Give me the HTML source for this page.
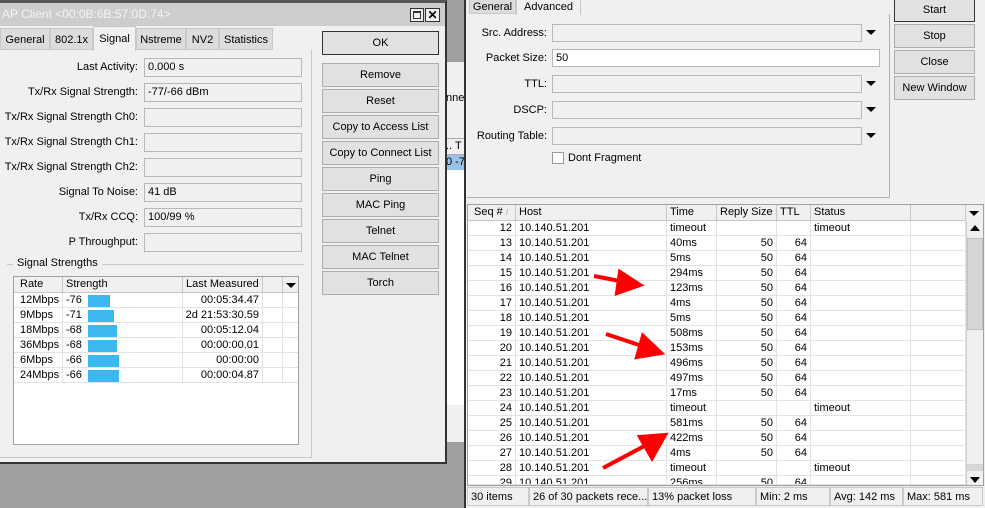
<!DOCTYPE html>
<html><head><style>
*{box-sizing:border-box;margin:0;padding:0;white-space:nowrap}
html,body{width:985px;height:508px;overflow:hidden}
body{position:relative;background:#a0a0a0;font-family:"Liberation Sans",sans-serif;font-size:11px;color:#000}
.a{position:absolute}
.btn{position:absolute;background:#e1e1e1;border:1px solid #adadad;text-align:center;line-height:22px;height:24px}
.lbl{position:absolute;text-align:right;width:138px;left:0}
.inp{position:absolute;left:144px;width:158px;height:19px;background:#f0f0f0;border:1px solid #b8b8b8;padding-left:3px;line-height:17px}
.tab{position:absolute;background:#dcdcdc;border:1px solid #c8c8c8;height:22px;line-height:22px;text-align:center}
.row{position:absolute;height:15px;line-height:15px;border-bottom:1px solid #e3e3e3}
.c{position:absolute;top:0;height:15px;border-right:1px solid #e3e3e3;overflow:hidden}
.r{text-align:right;padding-right:3px}
.l{padding-left:3px}
.bar{position:absolute;top:2px;height:12px;background:#3cb7ef}
.sb{position:absolute;top:0;height:19px;line-height:19px;border:1px solid #c8c8c8;padding-left:3px;background:#f0f0f0;overflow:hidden}
</style></head><body>
<div class="a" style="left:446px;top:62px;width:19px;height:24px;background:#f0f0f0"></div>
<div class="a" style="left:446px;top:86px;width:19px;height:356px;background:#f0f0f0"></div>
<div class="a" style="left:446px;top:92px;width:19px;overflow:hidden">nne</div>
<div class="a" style="left:446px;top:138px;width:19px;height:17px;background:#f0f0f0;border-top:1px solid #aaa;border-bottom:1px solid #aaa;line-height:15px;overflow:hidden">.. T</div>
<div class="a" style="left:446px;top:155px;width:19px;height:15px;background:#99c2e8;line-height:15px;overflow:hidden">0 -7</div>
<div class="a" style="left:446px;top:170px;width:19px;height:235px;background:#fff"></div>
<div class="a" style="left:0;top:0;width:447px;height:464px;background:#f0f0f0;border-right:2px solid #333;border-bottom:2px solid #333;border-top:3px solid #555"></div>
<div class="a" style="left:0;top:3px;width:445px;height:23px;background:#cdcdcd;color:#f4f4f4;line-height:23px;padding-left:2px;font-size:12px">AP Client &lt;00:0B:6B:57:0D:74&gt;</div>
<div class="a" style="left:410px;top:8px;width:14px;height:14px;border:1px solid #333;background:#eee"><div style="margin:2px;width:8px;height:8px;border:1px solid #333;border-top-width:2px"></div></div>
<div class="a" style="left:425px;top:8px;width:15px;height:14px;border:1px solid #333;background:#eee;font-weight:bold;font-size:12px;line-height:12px;text-align:center">✕</div>
<div class="tab" style="left:0;top:28px;width:50px">General</div>
<div class="tab" style="left:50px;top:28px;width:43px">802.1x</div>
<div class="a" style="left:93px;top:26px;width:43px;height:25px;background:#f0f0f0;border:1px solid #c8c8c8;border-bottom:none;text-align:center;line-height:24px">Signal</div>
<div class="tab" style="left:136px;top:28px;width:50px">Nstreme</div>
<div class="tab" style="left:186px;top:28px;width:33px">NV2</div>
<div class="tab" style="left:219px;top:28px;width:54px">Statistics</div>
<div class="a" style="left:0;top:50px;width:312px;height:408px;border-right:1px solid #c8c8c8;border-bottom:1px solid #c8c8c8"></div>
<div class="lbl" style="top:61px">Last Activity:</div><div class="inp" style="top:58px">0.000 s</div>
<div class="lbl" style="top:86px">Tx/Rx Signal Strength:</div><div class="inp" style="top:83px">-77/-66 dBm</div>
<div class="lbl" style="top:111px">Tx/Rx Signal Strength Ch0:</div><div class="inp" style="top:108px"></div>
<div class="lbl" style="top:136px">Tx/Rx Signal Strength Ch1:</div><div class="inp" style="top:133px"></div>
<div class="lbl" style="top:161px">Tx/Rx Signal Strength Ch2:</div><div class="inp" style="top:158px"></div>
<div class="lbl" style="top:186px">Signal To Noise:</div><div class="inp" style="top:183px">41 dB</div>
<div class="lbl" style="top:211px">Tx/Rx CCQ:</div><div class="inp" style="top:208px">100/99 %</div>
<div class="lbl" style="top:236px">P Throughput:</div><div class="inp" style="top:233px"></div>
<div class="a" style="left:7px;top:264px;width:297px;border-top:1px solid #c8c8c8"></div>
<div class="a" style="left:13px;top:257px;background:#f0f0f0;padding:0 4px">Signal Strengths</div>
<div class="a" style="left:13px;top:276px;width:286px;height:169px;background:#fff;border:1px solid #a0a0a0"></div>
<div class="row" style="left:14px;top:277px;width:284px;height:16px;background:#f0f0f0;border-bottom:1px solid #c8c8c8">
<div class="c l" style="left:3px;width:46px;height:16px;border-color:#c8c8c8">Rate</div>
<div class="c l" style="left:49px;width:120px;height:16px;border-color:#c8c8c8">Strength</div>
<div class="c l" style="left:169px;width:80px;height:16px;border-color:#c8c8c8">Last Measured</div>
<div class="c" style="left:249px;width:20px;height:16px;border-color:#c8c8c8"></div>
<div class="a" style="left:272px;top:6px;border-left:5px solid transparent;border-right:5px solid transparent;border-top:5px solid #000"></div>
</div>
<div id="ss"></div>
<div class="btn" style="left:322px;top:31px;width:117px;border:1px solid #333">OK</div>
<div class="btn" style="left:322px;top:63px;width:117px">Remove</div>
<div class="btn" style="left:322px;top:89px;width:117px">Reset</div>
<div class="btn" style="left:322px;top:115px;width:117px">Copy to Access List</div>
<div class="btn" style="left:322px;top:141px;width:117px">Copy to Connect List</div>
<div class="btn" style="left:322px;top:167px;width:117px">Ping</div>
<div class="btn" style="left:322px;top:193px;width:117px">MAC Ping</div>
<div class="btn" style="left:322px;top:219px;width:117px">Telnet</div>
<div class="btn" style="left:322px;top:245px;width:117px">MAC Telnet</div>
<div class="btn" style="left:322px;top:271px;width:117px">Torch</div>
<div class="a" style="left:464px;top:0;width:521px;height:508px;background:#f0f0f0;border-left:2px solid #333"></div>
<div class="tab" style="left:469px;top:-8px;width:47px;height:22px;line-height:28px">General</div>
<div class="a" style="left:516px;top:-4px;width:65px;height:19px;background:#f0f0f0;border:1px solid #c8c8c8;border-bottom:none;line-height:20px;text-align:center">Advanced</div>
<div class="a" style="left:467px;top:14px;width:423px;height:184px;border-right:1px solid #b0b0b0;border-bottom:1px solid #b0b0b0"></div>
<div class="a" style="left:465px;top:27px;width:82px;text-align:right">Src. Address:</div>
<div class="a" style="left:552px;top:24px;width:310px;height:18px;border:1px solid #b8b8b8"></div>
<div class="a" style="left:465px;top:52px;width:82px;text-align:right">Packet Size:</div>
<div class="a" style="left:552px;top:49px;width:328px;height:18px;border:1px solid #b8b8b8;background:#fff;padding-left:3px;line-height:16px">50</div>
<div class="a" style="left:465px;top:78px;width:82px;text-align:right">TTL:</div>
<div class="a" style="left:552px;top:75px;width:310px;height:18px;border:1px solid #b8b8b8"></div>
<div class="a" style="left:465px;top:104px;width:82px;text-align:right">DSCP:</div>
<div class="a" style="left:552px;top:101px;width:310px;height:18px;border:1px solid #b8b8b8"></div>
<div class="a" style="left:465px;top:130px;width:82px;text-align:right">Routing Table:</div>
<div class="a" style="left:552px;top:127px;width:310px;height:18px;border:1px solid #b8b8b8"></div>
<div class="a" style="left:866px;top:30px;border-left:5px solid transparent;border-right:5px solid transparent;border-top:5px solid #000"></div>
<div class="a" style="left:866px;top:81px;border-left:5px solid transparent;border-right:5px solid transparent;border-top:5px solid #000"></div>
<div class="a" style="left:866px;top:107px;border-left:5px solid transparent;border-right:5px solid transparent;border-top:5px solid #000"></div>
<div class="a" style="left:866px;top:133px;border-left:5px solid transparent;border-right:5px solid transparent;border-top:5px solid #000"></div>
<div class="a" style="left:552px;top:152px;width:12px;height:12px;border:1px solid #999;background:#fff"></div>
<div class="a" style="left:568px;top:152px">Dont Fragment</div>
<div class="btn" style="left:894px;top:-2px;width:81px;border:1px solid #333">Start</div>
<div class="btn" style="left:894px;top:24px;width:81px">Stop</div>
<div class="btn" style="left:894px;top:50px;width:81px">Close</div>
<div class="btn" style="left:894px;top:76px;width:81px">New Window</div>
<div class="a" style="left:467px;top:204px;width:517px;height:282px;background:#fff;border:1px solid #a0a0a0"></div>
<div class="row" style="left:468px;top:205px;width:498px;height:16px;background:#f0f0f0;border-bottom:1px solid #c8c8c8">
<div class="c l" style="left:3px;width:45px;height:16px;border-color:#c8c8c8">Seq # <span style="color:#aaa;font-size:9px">/</span></div>
<div class="c l" style="left:48px;width:151px;height:16px;border-color:#c8c8c8">Host</div>
<div class="c l" style="left:199px;width:50px;height:16px;border-color:#c8c8c8">Time</div>
<div class="c l" style="left:249px;width:60px;height:16px;border-color:#c8c8c8">Reply Size</div>
<div class="c l" style="left:309px;width:34px;height:16px;border-color:#c8c8c8">TTL</div>
<div class="c l" style="left:343px;width:100px;height:16px;border-color:#c8c8c8">Status</div>
<div class="c" style="left:443px;width:55px;height:16px;border-color:#c8c8c8"></div>
</div>
<div class="a" style="left:966px;top:205px;width:17px;height:16px;background:#f0f0f0"><div class="a" style="left:3px;top:6px;border-left:5px solid transparent;border-right:5px solid transparent;border-top:5px solid #000"></div></div>
<div class="a" style="left:966px;top:221px;width:17px;height:264px;background:#f0f0f0;border-left:1px solid #ccc"></div>
<div class="a" style="left:967px;top:238px;width:16px;height:92px;background:#d6d6d6;border:1px solid #c0c0c0"></div>
<div class="a" style="left:967px;top:464px;width:16px;height:7px;background:#d6d6d6"></div>
<div class="a" style="left:970px;top:225px;border-left:5px solid transparent;border-right:5px solid transparent;border-bottom:6px solid #000"></div>
<div class="a" style="left:970px;top:477px;border-left:5px solid transparent;border-right:5px solid transparent;border-top:6px solid #000"></div>
<div id="pt"></div>
<div class="a" style="left:466px;top:486px;width:519px;height:22px;background:#f0f0f0"></div>
<div class="sb" style="left:467px;top:487px;width:62px">30 items</div>
<div class="sb" style="left:529px;top:487px;width:119px">26 of 30 packets rece...</div>
<div class="sb" style="left:648px;top:487px;width:108px">13% packet loss</div>
<div class="sb" style="left:756px;top:487px;width:74px">Min: 2 ms</div>
<div class="sb" style="left:830px;top:487px;width:73px">Avg: 142 ms</div>
<div class="sb" style="left:903px;top:487px;width:80px">Max: 581 ms</div>
<svg class="a" style="left:0;top:0" width="985" height="508">
<g stroke="#f00" stroke-width="4" fill="#f00">
<line x1="594" y1="276" x2="625" y2="282"/><polygon points="640,285 620,272 617,293"/>
<line x1="606" y1="334" x2="645" y2="347"/><polygon points="661,353 643,336 637,357"/>
<line x1="603" y1="468" x2="650" y2="443"/><polygon points="665,435 640,437 652,458"/>
</g></svg>
<script>
var s=[["12Mbps","-76",22,"00:05:34.47"],["9Mbps","-71",26,"2d 21:53:30.59"],["18Mbps","-68",29,"00:05:12.04"],["36Mbps","-68",29,"00:00:00.01"],["6Mbps","-66",31,"00:00:00"],["24Mbps","-66",31,"00:00:04.87"]];
var h="";s.forEach(function(r,i){h+='<div class="row" style="left:14px;top:'+(293+i*15)+'px;width:284px"><div class="c l" style="left:3px;width:46px">'+r[0]+'</div><div class="c l" style="left:49px;width:120px">'+r[1]+'<div class="bar" style="left:25px;width:'+r[2]+'px"></div></div><div class="c r" style="left:169px;width:80px">'+r[3]+'</div><div class="c" style="left:249px;width:20px"></div></div>';});
document.getElementById("ss").innerHTML=h;
var t=["timeout","40ms","5ms","294ms","123ms","4ms","5ms","508ms","153ms","496ms","497ms","17ms","timeout","581ms","422ms","4ms","timeout","256ms"];
h="";t.forEach(function(v,i){var to=v=="timeout";var y=221+i*15;var hh=Math.min(15,485-y);h+='<div class="row" style="left:468px;top:'+y+'px;width:498px;height:'+hh+'px;overflow:hidden"><div class="c r" style="left:3px;width:45px">'+(12+i)+'</div><div class="c l" style="left:48px;width:151px">10.140.51.201</div><div class="c l" style="left:199px;width:50px">'+v+'</div><div class="c r" style="left:249px;width:60px">'+(to?"":"50")+'</div><div class="c r" style="left:309px;width:34px">'+(to?"":"64")+'</div><div class="c l" style="left:343px;width:100px">'+(to?"timeout":"")+'</div><div class="c" style="left:443px;width:55px"></div></div>';});
document.getElementById("pt").innerHTML=h;
</script>
</body></html>
